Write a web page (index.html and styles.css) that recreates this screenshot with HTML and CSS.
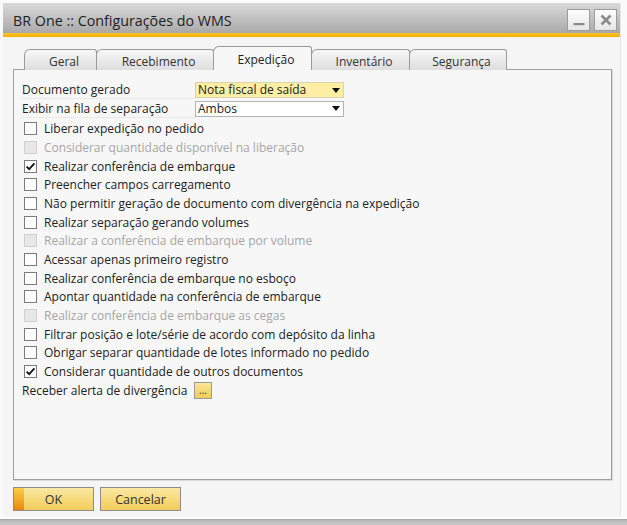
FILE: index.html
```html
<!DOCTYPE html>
<html lang="pt-BR">
<head>
<meta charset="utf-8">
<title>BR One :: Configurações do WMS</title>
<link rel="stylesheet" href="styles.css">
</head>
<body>
<div class="screen">
  <div class="window">
    <div class="titlebar">
      <span class="title">BR One :: Configurações do WMS</span>
      <div class="winbtns">
        <span class="wbtn"><svg width="12" height="12" viewBox="0 0 12 12"><rect x="0.5" y="9" width="11" height="2.2" fill="#8a8a8a"/></svg></span>
        <span class="wbtn"><svg width="12" height="12" viewBox="0 0 12 12"><path d="M1.5 1.5 L10.5 10.5 M10.5 1.5 L1.5 10.5" stroke="#8a8a8a" stroke-width="2.6" fill="none"/></svg></span>
      </div>
    </div>
    <div class="accent"></div>
    <div class="content">
      <div class="tabs">
        <span class="tab t-geral">Geral</span>
        <span class="tab t-receb">Recebimento</span>
        <span class="tab t-exp active">Expedição</span>
        <span class="tab t-inv">Inventário</span>
        <span class="tab t-seg">Segurança</span>
      </div>
      <div class="panel">
        <div class="field">
          <span class="flabel">Documento gerado</span>
          <div class="select yellow"><span>Nota fiscal de saída</span><span class="arrow"></span></div>
        </div>
        <div class="field">
          <span class="flabel">Exibir na fila de separação</span>
          <div class="select"><span>Ambos</span><span class="arrow"></span></div>
        </div>
        <div class="check"><span class="box"></span><span>Liberar expedição no pedido</span></div>
        <div class="check disabled"><span class="box"></span><span>Considerar quantidade disponível na liberação</span></div>
        <div class="check"><span class="box"><svg width="11" height="11" viewBox="0 0 11 11"><polyline points="1.6,5.6 4.2,8.2 9.4,2.4" stroke="#111" stroke-width="1.8" fill="none"/></svg></span><span>Realizar conferência de embarque</span></div>
        <div class="check"><span class="box"></span><span>Preencher campos carregamento</span></div>
        <div class="check"><span class="box"></span><span>Não permitir geração de documento com divergência na expedição</span></div>
        <div class="check"><span class="box"></span><span>Realizar separação gerando volumes</span></div>
        <div class="check disabled"><span class="box"></span><span>Realizar a conferência de embarque por volume</span></div>
        <div class="check"><span class="box"></span><span>Acessar apenas primeiro registro</span></div>
        <div class="check"><span class="box"></span><span>Realizar conferência de embarque no esboço</span></div>
        <div class="check"><span class="box"></span><span>Apontar quantidade na conferência de embarque</span></div>
        <div class="check disabled"><span class="box"></span><span>Realizar conferência de embarque as cegas</span></div>
        <div class="check"><span class="box"></span><span>Filtrar posição e lote/série de acordo com depósito da linha</span></div>
        <div class="check"><span class="box"></span><span>Obrigar separar quantidade de lotes informado no pedido</span></div>
        <div class="check"><span class="box"><svg width="11" height="11" viewBox="0 0 11 11"><polyline points="1.6,5.6 4.2,8.2 9.4,2.4" stroke="#111" stroke-width="1.8" fill="none"/></svg></span><span>Considerar quantidade de outros documentos</span></div>
        <div class="alert-row">
          <span class="alabel">Receber alerta de divergência</span>
          <span class="dots">...</span>
        </div>
      </div>
      <div class="actions">
        <button class="btn ok"><span class="okstrip"></span><span class="btxt">OK</span></button>
        <button class="btn"><span class="btxt">Cancelar</span></button>
      </div>
    </div>
  </div>
  <div class="gap"></div>
  <div class="strip"></div>
</div>
</body>
</html>
```

FILE: styles.css
```css
* { box-sizing: border-box; }
html, body { margin: 0; padding: 0; }
body {
  font-family: "Open Sans", "Noto Sans", "DejaVu Sans", sans-serif;
  font-size: 12px;
  color: #222;
  background: #fafafa;
}
.screen {
  width: 627px;
  height: 525px;
  display: flex;
  flex-direction: column;
  background: #fafafa;
  overflow: hidden;
}
.window {
  margin: 3px 6px 0 3px;
  height: 514px;
  background: #f5f5f5;
  border-right: 1px solid #e6e6e6;
  display: flex;
  flex-direction: column;
}
.titlebar {
  height: 30px;
  background: linear-gradient(#d9d9d9, #c4c4c4 45%, #a9a9a9);
  display: flex;
  align-items: center;
  justify-content: space-between;
  padding: 0 3px 0 10px;
}
.title {
  font-size: 14.3px;
  color: #1e1e1e;
  padding-top: 5px;
}
.winbtns { display: flex; gap: 4px; padding-top: 3px; }
.wbtn {
  width: 23px;
  height: 22px;
  background: linear-gradient(#fdfdfd, #e6e6e6);
  border: 1px solid #9c9c9c;
  display: flex;
  align-items: center;
  justify-content: center;
}
.accent {
  height: 4px;
  background: linear-gradient(#fbc22a, #f5b000);
}
.content {
  flex: 1;
  padding: 10px 8px 0 10px;
  display: flex;
  flex-direction: column;
}
.tabs {
  height: 23px;
  display: flex;
  align-items: flex-end;
  padding-left: 11px;
  margin-bottom: -1px;
  position: relative;
  z-index: 1;
}
.tab {
  height: 21px;
  border: 1px solid #9a9a9a;
  border-bottom: none;
  border-radius: 6px 3px 0 0;
  background: linear-gradient(#f7f7f7, #dedede);
  color: #333;
  font-size: 12px;
  display: flex;
  align-items: center;
  justify-content: center;
  padding: 2px 0 0 7px;
  margin-left: -1px;
}
.tab.active {
  height: 24px;
  background: #f7f7f7;
  padding-top: 1px;
  color: #222;
}
.t-geral { width: 73px; margin-left: 0; }
.t-receb { width: 118px; }
.t-exp { width: 99px; }
.t-inv { width: 99px; }
.t-seg { width: 98px; }
.panel {
  height: 411px;
  border: 1px solid #9e9e9e;
  background: #f7f7f7;
  box-shadow: 1px 1px 0 #d9d9d9;
  padding: 12px 0 0 0;
}
.field {
  height: 18.7px;
  display: flex;
  align-items: flex-start;
  padding-left: 8px;
}
.flabel {
  width: 173px;
  height: 17px;
  line-height: 16px;
  border-bottom: 1px solid #e8e8e8;
}
.select {
  width: 149px;
  height: 16px;
  border: 1px solid #b4b4b4;
  background: #fff;
  display: flex;
  align-items: center;
  justify-content: space-between;
  padding: 0 3px 0 2px;
  line-height: 14px;
}
.select.yellow {
  background: #fdeea4;
  border-color: #d9d3b0;
}
.arrow {
  width: 0;
  height: 0;
  border-left: 4px solid transparent;
  border-right: 4px solid transparent;
  border-top: 5px solid #111;
}
.check {
  height: 18.7px;
  display: flex;
  align-items: center;
  padding-left: 10px;
}
.box {
  width: 13px;
  height: 13px;
  border: 1px solid #7c7c7c;
  background: #fff;
  margin-right: 7px;
  display: flex;
  align-items: center;
  justify-content: center;
  flex-shrink: 0;
}
.check.disabled { color: #a6a6a6; }
.check.disabled .box {
  background: #e7e7e7;
  border-color: #cfcfcf;
}
.alert-row {
  height: 18.7px;
  display: flex;
  align-items: center;
  padding-left: 8px;
}
.alabel { width: 172px; }
.dots {
  width: 18px;
  height: 17px;
  border: 1px solid #9a9a9a;
  background: linear-gradient(#fae69a, #f0cc55);
  font-size: 10px;
  line-height: 10px;
  display: flex;
  align-items: center;
  justify-content: center;
  color: #333;
}
.actions {
  display: flex;
  gap: 6px;
  margin-top: 7px;
}
.btn {
  width: 81px;
  height: 24px;
  border: 1px solid #8c8c8c;
  background: linear-gradient(#fbe9a4, #f5d774 60%, #f1cd5c);
  font-family: "Open Sans", "Noto Sans", sans-serif;
  font-size: 12.5px;
  color: #333;
  padding: 0;
  display: flex;
  align-items: stretch;
}
.okstrip {
  width: 10px;
  background: linear-gradient(#f9cf45, #f0a524 60%, #e8860e);
}
.btxt {
  flex: 1;
  display: flex;
  align-items: center;
  justify-content: center;
}
.ok .btxt { padding-right: 10px; }
.gap { height: 2px; background: #ffffff; }
.strip {
  flex: 1;
  background: linear-gradient(#b8b8b8, #cacaca);
  border-top: 1px solid #a8a8a8;
}
```
